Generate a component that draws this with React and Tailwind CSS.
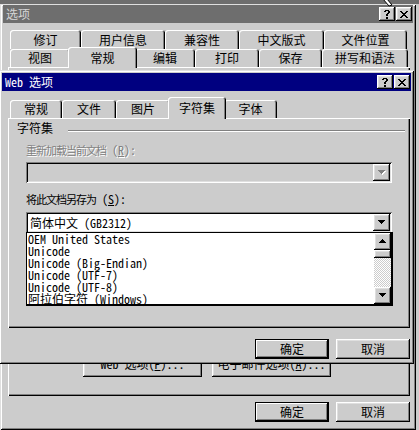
import React from "react";

// win98 bevels
const raised =
  "bg-[#cccccc] shadow-[inset_-1px_-1px_0_#000,inset_1px_1px_0_#fff,inset_-2px_-2px_0_#808080,inset_2px_2px_0_#dfdfdf]";
const defaultBtn =
  "bg-[#cccccc] border border-black shadow-[inset_-1px_-1px_0_#000,inset_1px_1px_0_#fff,inset_-2px_-2px_0_#808080]";
const sunken =
  "shadow-[inset_1px_1px_0_#808080,inset_-1px_-1px_0_#fff,inset_2px_2px_0_#000,inset_-2px_-2px_0_#dfdfdf]";
const windowFrame =
  "bg-[#cccccc] shadow-[inset_1px_1px_0_#dfdfdf,inset_-1px_-1px_0_#000,inset_2px_2px_0_#fff,inset_-2px_-2px_0_#808080]";
const panel =
  "bg-[#cccccc] shadow-[inset_1px_1px_0_#fff,inset_-1px_-1px_0_#000,inset_-2px_-2px_0_#808080]";
const tabCls =
  "flex shrink-0 items-center justify-center rounded-t-[3px] bg-[#cccccc] text-[12px] leading-[12px] shadow-[inset_1px_1px_0_#fff,inset_-1px_0_0_#000,inset_-2px_0_0_#808080]";

function HelpGlyph() {
  return (
    <svg width="8" height="9" viewBox="0 0 8 9" shapeRendering="crispEdges">
      <path
        d="M2 0h4v1H2zM1 1h2v1H1zM5 1h2v2H5zM4 3h2v1H4zM3 4h2v2H3zM3 7h2v2H3z"
        fill="#000"
      />
    </svg>
  );
}

function CloseGlyph() {
  return (
    <svg width="8" height="7" viewBox="0 0 8 7" shapeRendering="crispEdges">
      <path
        d="M0 0h2v1H0zM6 0h2v1H6zM1 1h2v1H1zM5 1h2v1H5zM2 2h4v1H2zM3 3h2v1H3zM2 4h4v1H2zM1 5h2v1H1zM5 5h2v1H5zM0 6h2v1H0zM6 6h2v1H6z"
        fill="#000"
      />
    </svg>
  );
}

function Arrow({ up, color = "#000", shadow }) {
  const d = up
    ? "M3 0h1v1H3zM2 1h3v1H2zM1 2h5v1H1zM0 3h7v1H0z"
    : "M0 0h7v1H0zM1 1h5v1H1zM2 2h3v1H2zM3 3h1v1H3z";
  return (
    <svg width="8" height="5" viewBox="0 0 8 5" shapeRendering="crispEdges">
      {shadow && <path d={d} fill="#fff" transform="translate(1 1)" />}
      <path d={d} fill={color} />
    </svg>
  );
}

function TitleBar({ title, active }) {
  return (
    <div
      className={`flex h-[18px] shrink-0 items-center justify-between pl-[3px] ${
        active ? "bg-[#000080] text-white" : "bg-[#6e6e6e] text-[#d6d6d6]"
      }`}
    >
      <span className="text-[12px] leading-[12px] whitespace-pre">{title}</span>
      <div className="flex gap-[1px] pr-[1px]">
        <div className={`flex h-[14px] w-[16px] items-center justify-center ${raised}`}>
          <HelpGlyph />
        </div>
        <div className={`flex h-[14px] w-[16px] items-center justify-center ${raised}`}>
          <CloseGlyph />
        </div>
      </div>
    </div>
  );
}

function Tab({ label, w, h, selected }) {
  return (
    <div
      className={`${tabCls} ${selected ? "relative top-[1px] z-10 -mx-[2px]" : ""}`}
      style={{ width: selected ? w + 4 : w, height: h }}
    >
      {label}
    </div>
  );
}

function OkCancel() {
  return (
    <div className="flex justify-end gap-[7px] text-[12px] leading-[12px]">
      <div className={`flex h-[20px] w-[74px] items-center justify-center ${defaultBtn}`}>确定</div>
      <div className={`flex h-[20px] w-[74px] items-center justify-center ${raised}`}>取消</div>
    </div>
  );
}

function Combo({ disabled, children }) {
  return (
    <div
      className={`flex h-[21px] w-[366px] items-center p-[2px] ${sunken} ${
        disabled ? "bg-[#cccccc]" : "bg-white"
      }`}
    >
      <div className="flex-1 pl-[2px] text-[12px] leading-[12px] whitespace-pre">{children}</div>
      <div className={`flex h-[17px] w-[17px] items-center justify-center ${raised}`}>
        {disabled ? <Arrow color="#808080" shadow /> : <Arrow />}
      </div>
    </div>
  );
}

const charsets = [
  "OEM United States",
  "Unicode",
  "Unicode (Big-Endian)",
  "Unicode (UTF-7)",
  "Unicode (UTF-8)",
  "阿拉伯字符 (Windows)",
];

function WebOptions() {
  return (
    <div className={`absolute left-[-1px] top-[70px] flex h-[294px] w-[415px] flex-col p-[3px] ${windowFrame}`}>
      <TitleBar title="Web 选项" active />

      <div className="mt-[6px] ml-[6px] w-[402px]">
        <div className="flex h-[21px] items-end pl-[2px]">
          <Tab label="常规" w={52} h={18} />
          <Tab label="文件" w={54} h={18} />
          <Tab label="图片" w={54} h={18} />
          <Tab label="字符集" w={54} h={22} selected />
          <Tab label="字体" w={53} h={18} />
        </div>

        <div className={`flex h-[210px] w-[402px] flex-col pt-[4px] ${panel}`}>
          <div className="flex h-[12px] items-start pl-[9px] pr-[5px]">
            <span className="text-[12px] leading-[12px]">字符集</span>
            <div className="mt-[8px] ml-[15px] h-[2px] flex-1 border-t border-b border-t-[#808080] border-b-white" />
          </div>

          <div className="flex flex-col pl-[18px]">
            <div className="mt-[10px] h-[12px] text-[11px] leading-[12px] text-[#808080] [text-shadow:1px_1px_0_#fff]">
              <span className="tracking-[-1px]">重新加载当前文档</span>
              <span className="text-[12px]">
                {" "}(<span className="underline">R</span>):
              </span>
            </div>
            <div className="mt-[6px]">
              <Combo disabled />
            </div>

            <div className="mt-[10px] h-[12px] text-[11px] leading-[12px]">
              <span className="tracking-[-1px]">将此文档另存为</span>
              <span className="text-[12px]">
                {" "}(<span className="underline">S</span>):
              </span>
            </div>
            <div className="mt-[7px]">
              <Combo>简体中文 (GB2312)</Combo>
            </div>

            <div className="relative z-10 -mt-[1px] flex h-[74px] w-[367px] border border-r-2 border-b-2 border-black bg-white">
              <div className="flex flex-1 flex-col pl-[1px]">
                {charsets.map((c) => (
                  <div key={c} className="h-[12px] text-[12px] leading-[12px] whitespace-pre">
                    {c}
                  </div>
                ))}
              </div>
              <div className="flex w-[17px] flex-col">
                <div className={`flex h-[17px] items-center justify-center ${raised}`}>
                  <Arrow up />
                </div>
                <div className={`h-[8px] ${raised}`} />
                <div className="flex-1 bg-[repeating-conic-gradient(#fff_0%_25%,#cccccc_0%_50%)] bg-[length:2px_2px]" />
                <div className={`flex h-[17px] items-center justify-center ${raised}`}>
                  <Arrow />
                </div>
              </div>
            </div>
          </div>
        </div>

        <div className="mt-[11px]">
          <OkCancel />
        </div>
      </div>
    </div>
  );
}

export default function App() {
  return (
    <div className="relative h-[430px] w-[419px] overflow-hidden bg-[#cccccc] font-['Noto_Sans_Mono_CJK_SC','Noto_Sans_CJK_SC',monospace] text-black">
      <div className="h-[4px] bg-[#6e6e6e]" />

      {/* Options dialog (behind) */}
      <div className={`flex h-[426px] w-[416px] flex-col px-[3px] pt-[1px] ${windowFrame}`}>
        <TitleBar title="选项" />

        <div className="mt-[7px] ml-[5px] w-[402px]">
          <div className="flex h-[19px] pl-[2px]">
            <Tab label="修订" w={71} h={19} />
            <Tab label="用户信息" w={84} h={19} />
            <Tab label="兼容性" w={74} h={19} />
            <Tab label="中文版式" w={85} h={19} />
            <Tab label="文件位置" w={83} h={19} />
          </div>
          <div className="flex h-[18px] items-end pl-[2px]">
            <Tab label="视图" w={60} h={18} />
            <Tab label="常规" w={65} h={21} selected />
            <Tab label="编辑" w={60} h={18} />
            <Tab label="打印" w={64} h={18} />
            <Tab label="保存" w={63} h={18} />
            <Tab label="拼写和语法" w={86} h={18} />
          </div>

          <div className={`flex h-[329px] flex-col justify-end pb-[19px] pl-[75px] ${panel}`}>
            <div className="flex gap-[10px] text-[12px] leading-[12px]">
              <div className={`flex h-[22px] w-[119px] items-center justify-center whitespace-pre pb-[4px] ${raised}`}>
                Web 选项(<span className="underline">P</span>)...
              </div>
              <div className={`flex h-[22px] w-[119px] items-center justify-center whitespace-pre pb-[4px] ${raised}`}>
                电子邮件选项(<span className="underline">A</span>)...
              </div>
            </div>
          </div>

          <div className="mt-[6px]">
            <OkCancel />
          </div>
        </div>
      </div>

      <WebOptions />

      {/* tail of the mouse pointer */}
      <svg className="absolute left-[381px] top-0" width="13" height="7" viewBox="0 0 13 7">
        <path d="M2 -1 L6 -1 L11 5 L8 6 Z" fill="#fff" stroke="#000" strokeWidth="1" />
      </svg>
    </div>
  );
}
